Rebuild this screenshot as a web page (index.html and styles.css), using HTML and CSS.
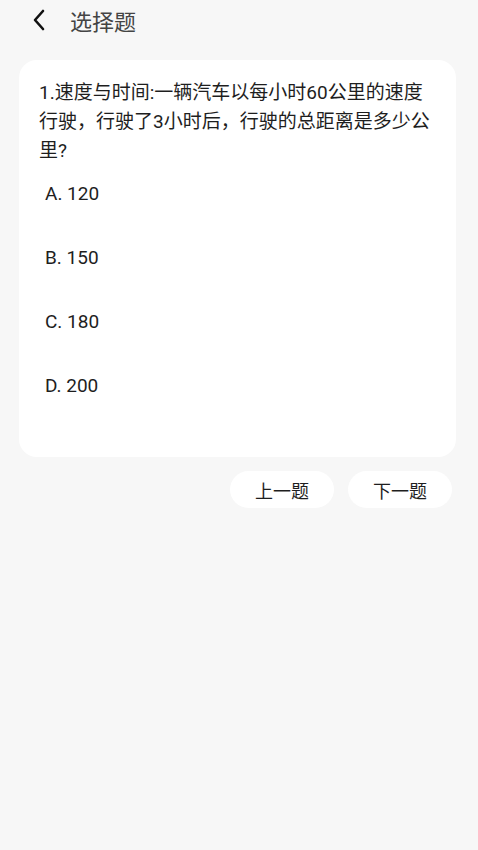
FILE: index.html
```html
<!DOCTYPE html>
<html>
<head>
  <title>选择题</title>
  <link rel="stylesheet" href="styles.css">
</head>
<body>
  <div class="header">
    <svg class="back" width="14" height="22" viewBox="0 0 14 22">
      <path d="M11 2 L3 11 L11 20" fill="none" stroke="#111" stroke-width="2.6" stroke-linecap="round" stroke-linejoin="round"/>
    </svg>
    <span class="title">选择题</span>
  </div>

  <div class="card">
    <div class="question">1.速度与时间:一辆汽车以每小时60公里的速度行驶，行驶了3小时后，行驶的总距离是多少公里?</div>
    <div class="option">A. 120</div>
    <div class="option">B. 150</div>
    <div class="option">C. 180</div>
    <div class="option">D. 200</div>
  </div>

  <div class="actions">
    <button type="button" class="btn">上一题</button>
    <button type="button" class="btn">下一题</button>
  </div>
</body>
</html>
```

FILE: styles.css
```css
body {
  margin: 0;
  background-color: #f7f7f7;
  font-family: Roboto, "Noto Sans CJK SC", sans-serif;
  color: #1e1e1e;
}
.header {
  height: 40px;
  display: flex;
  align-items: center;
  padding-left: 32px;
}
.back {
  display: block;
}
.title {
  margin-left: 24px;
  font-size: 22px;
  color: #444;
}
.card {
  margin: 20px 22px 0 19px;
  padding: 18px 20px 57px 20px;
  background-color: #fff;
  border-radius: 18px;
}
.question {
  font-size: 19px;
  line-height: 29px;
}
.option {
  font-size: 19px;
  line-height: 29px;
  padding-left: 6px;
  margin-top: 35px;
}
.question + .option {
  margin-top: 14px;
}
.actions {
  display: flex;
  justify-content: flex-end;
  gap: 14px;
  margin-top: 14px;
  padding-right: 26px;
}
.btn {
  width: 104px;
  height: 37px;
  border: none;
  border-radius: 19px;
  background-color: #fff;
  font-family: Roboto, "Noto Sans CJK SC", sans-serif;
  font-size: 18px;
  color: #1e1e1e;
  padding: 0;
}
```
